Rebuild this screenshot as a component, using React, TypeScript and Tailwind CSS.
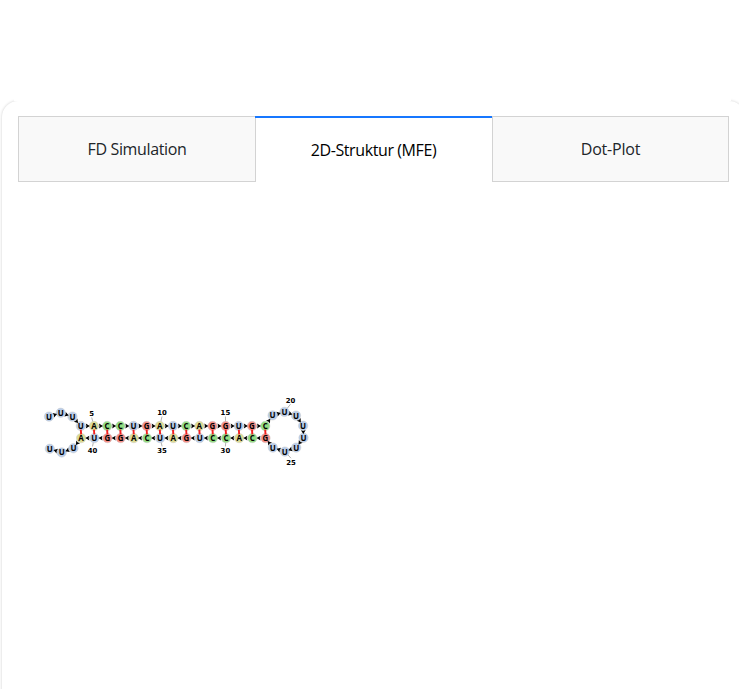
type Base = { n: string; x: number; y: number };

const fills: Record<string, string> = { U: '#b9cdea', A: '#dddb94', C: '#93dd84', G: '#f7908a' };

const lead: Base[] = [
  { n: 'U', x: 49, y: 416.6 },
  { n: 'U', x: 60.7, y: 412.8 },
  { n: 'U', x: 72.4, y: 416.6 },
];
const top: Base[] = 'UACCUGAUCAGGUGC'.split('').map((n, i) => ({ n, x: 80.8 + i * 13.17, y: 426 }));
const loop: Base[] = [
  { n: 'U', x: 272.6, y: 415.4 },
  { n: 'U', x: 284.4, y: 411.9 },
  { n: 'U', x: 296, y: 415.6 },
  { n: 'U', x: 303.1, y: 425.8 },
  { n: 'U', x: 303.5, y: 437.8 },
  { n: 'U', x: 296.2, y: 447.6 },
  { n: 'U', x: 284.8, y: 451.6 },
  { n: 'U', x: 272.8, y: 447.6 },
];
const bottom: Base[] = 'GCACCUGAUCAGGUA'.split('').map((n, i) => ({ n, x: 265.5 - i * 13.17, y: 438.1 }));
const tail: Base[] = [
  { n: 'U', x: 73.4, y: 448.3 },
  { n: 'U', x: 61.7, y: 452.5 },
  { n: 'U', x: 49.8, y: 448.8 },
];
const bases = [...lead, ...top, ...loop, ...bottom, ...tail];

const labels = [
  { t: '5', x: 91.7, y: 416.2, i: 4 },
  { t: '10', x: 162, y: 415.2, i: 9 },
  { t: '15', x: 225.4, y: 415.2, i: 14 },
  { t: '20', x: 290.5, y: 402.9, i: 19 },
  { t: '25', x: 291, y: 464.9, i: 24 },
  { t: '30', x: 225.4, y: 453.1, i: 29 },
  { t: '35', x: 162.1, y: 453.1, i: 34 },
  { t: '40', x: 92.5, y: 453.1, i: 39 },
];

function Structure() {
  return (
    <svg
      viewBox="40 390 280 80"
      className="block h-[80px] w-[280px] font-['DejaVu_Sans',sans-serif] font-bold"
      role="img"
      aria-label="2D-Struktur"
    >
      {labels.map((l) => (
        <line key={l.t} x1={bases[l.i].x} y1={bases[l.i].y} x2={l.x} y2={l.y - 2.7 + (l.y < 430 ? 4 : -4)} stroke="#aaa" strokeWidth="0.9" />
      ))}
      {bases.slice(1).map((b, i) => (
        <line key={i} x1={bases[i].x} y1={bases[i].y} x2={b.x} y2={b.y} stroke="#a5a5a5" strokeWidth="0.9" />
      ))}
      {bases.map((b, i) => (
        <circle key={i} cx={b.x} cy={b.y} r="4.7" fill={fills[b.n]} stroke="#ccc" strokeWidth="0.5" />
      ))}
      {top.map((b, i) => (
        <line key={i} x1={b.x} y1="429.6" x2={bottom[14 - i].x} y2="434.4" stroke="#f22020" strokeWidth="1.9" />
      ))}
      {bases.slice(1).map((b, i) => {
        const a = bases[i];
        const angle = (Math.atan2(b.y - a.y, b.x - a.x) * 180) / Math.PI;
        return (
          <path
            key={i}
            d="M-1.6-2.4 L2.3 0 L-1.6 2.4 L-.9 0Z"
            fill="#000"
            transform={`translate(${(a.x + b.x) / 2} ${(a.y + b.y) / 2}) rotate(${angle})`}
          />
        );
      })}
      {bases.map((b, i) => (
        <text key={i} x={b.x} y={b.y + 2.9} textAnchor="middle" fontSize="8" className="font-['Open_Sans',sans-serif]">
          {b.n}
        </text>
      ))}
      {labels.map((l) => (
        <text key={l.t} x={l.x} y={l.y} textAnchor="middle" fontSize="6.9">
          {l.t}
        </text>
      ))}
    </svg>
  );
}

export default function App() {
  return (
    <div className="h-[689px] w-full overflow-hidden bg-white pt-[101px] pl-[2px] font-['Open_Sans','Noto_Sans',sans-serif]">
      <main className="relative h-[620px] w-[743px] rounded-2xl bg-white px-4 pt-[15px] shadow-[0_0_3px_rgba(0,0,0,0.2)]">
        <div className="absolute -top-1 right-[14px] left-[12px] h-1 bg-white" />
        <div className="flex h-[66px] w-[711px] text-[16px] leading-6 text-[#212529]">
          <button className="w-[238px] border border-[#d3d3d3] bg-[#f9f9f9] tracking-[-0.35px]">FD Simulation</button>
          <button className="-ml-px w-[237px] border-t-2 border-[#1677ff] pb-px tracking-[-0.4px] text-black">2D-Struktur (MFE)</button>
          <button className="w-[237px] border border-[#d3d3d3] bg-[#f9f9f9] tracking-[-0.2px]">Dot-Plot</button>
        </div>
        <section className="pt-[208px] pl-[22px]">
          <Structure />
        </section>
      </main>
    </div>
  );
}
